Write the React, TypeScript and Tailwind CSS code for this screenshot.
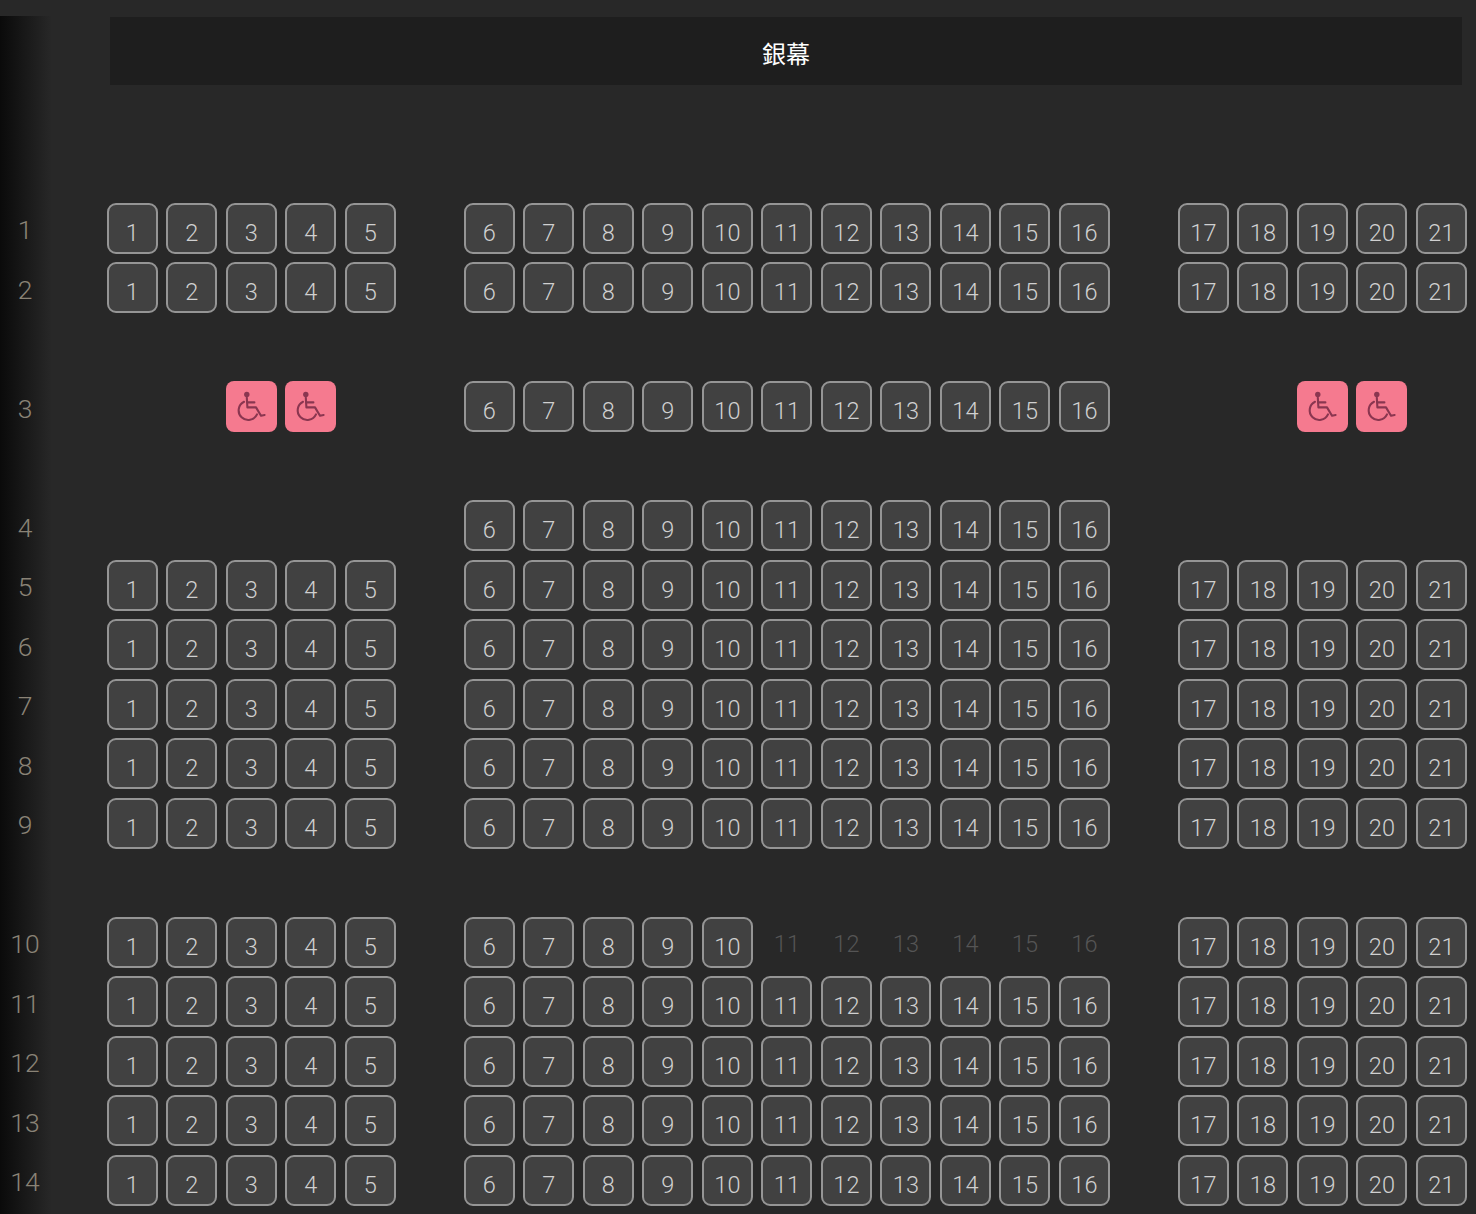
import React from "react";

const ALL = Array.from({ length: 21 }, (_, i) => i + 1);
const MID = ALL.slice(5, 16);

type Kind = "normal" | "wheel" | "ghost";
type RowDef = { label: string | null; seats: number[]; wheel?: number[]; ghost?: number[] };

const rows: RowDef[] = [
  { label: "1", seats: ALL },
  { label: "2", seats: ALL },
  { label: null, seats: [] },
  { label: "3", seats: MID, wheel: [3, 4, 19, 20] },
  { label: null, seats: [] },
  { label: "4", seats: MID },
  { label: "5", seats: ALL },
  { label: "6", seats: ALL },
  { label: "7", seats: ALL },
  { label: "8", seats: ALL },
  { label: "9", seats: ALL },
  { label: null, seats: [] },
  { label: "10", seats: ALL.filter((n) => n < 11 || n > 16), ghost: [11, 12, 13, 14, 15, 16] },
  { label: "11", seats: ALL },
  { label: "12", seats: ALL },
  { label: "13", seats: ALL },
  { label: "14", seats: ALL },
];

// Seat numbers map to grid columns with one aisle after 5 and one after 16.
const columnOf = (n: number) => (n <= 5 ? n : n <= 16 ? n + 1 : n + 2);

function cellsOf(row: RowDef): { n: number; kind: Kind }[] {
  const cells: { n: number; kind: Kind }[] = [
    ...row.seats.map((n) => ({ n, kind: "normal" as Kind })),
    ...(row.wheel ?? []).map((n) => ({ n, kind: "wheel" as Kind })),
    ...(row.ghost ?? []).map((n) => ({ n, kind: "ghost" as Kind })),
  ];
  return cells.sort((a, b) => a.n - b.n);
}

function Wheelchair() {
  return (
    <svg width="51" height="51" viewBox="0 0 51 51" fill="none" stroke="#8a3650" strokeWidth="2.1" strokeLinecap="round" strokeLinejoin="round">
      <circle cx="20.8" cy="13.4" r="2.7" fill="#8a3650" stroke="none" />
      <path d="M20.8 16.5 L21.4 26.4 H30 L35 34.8 L38.6 34" />
      <path d="M21.2 21.4 H28.4" />
      <path d="M18 20.8 A9.6 9.6 0 1 0 31 33.4" />
    </svg>
  );
}

function Seat({ n, kind }: { n: number; kind: Kind }) {
  const style = { gridColumnStart: columnOf(n) };
  if (kind === "wheel") {
    return (
      <div style={style} className="w-[51px] h-[51px] rounded-[8px] bg-[#f57a8f] flex items-center justify-center">
        <Wheelchair />
      </div>
    );
  }
  if (kind === "ghost") {
    return (
      <div style={style} className="w-[51px] h-[51px] flex items-center justify-center pt-[5px] text-[23.5px] font-light text-[#555555]">
        {n}
      </div>
    );
  }
  return (
    <div style={style} className="w-[51px] h-[51px] rounded-[9px] border-2 border-[#959595] bg-[#414141] flex items-center justify-center pt-[10px] text-[23.5px] font-light text-[#d0d0d0]">
      {n}
    </div>
  );
}

export default function App() {
  return (
    <div className="relative w-[1476px] h-[1214px] overflow-hidden bg-[#282828] font-['Roboto',sans-serif]">
      <div className="absolute left-0 top-[16px] bottom-0 w-[52px] bg-gradient-to-r from-[#0a0a0a] to-transparent" />
      <div className="relative pt-[17px]">
        <div className="ml-[110px] w-[1352px] h-[68px] bg-[#1e1e1e] flex items-center justify-center pt-[7px] text-white text-[24px] font-['Roboto','Noto_Sans_CJK_TC',sans-serif]">
          銀幕
        </div>
        <div className="mt-[117.9px] flex flex-col gap-y-[8.5px]">
          {rows.map((row, i) => (
            <div key={i} className="flex h-[51px]">
              <div className="w-[50px] shrink-0 flex items-center justify-center pt-[3px] text-[26.5px] font-light text-[#8a8376]">
                {row.label}
              </div>
              <div className="ml-[56.9px] grid grid-cols-[repeat(23,51px)] gap-x-[8.5px]">
                {cellsOf(row).map((c) => (
                  <Seat key={c.n} n={c.n} kind={c.kind} />
                ))}
              </div>
            </div>
          ))}
        </div>
      </div>
    </div>
  );
}
